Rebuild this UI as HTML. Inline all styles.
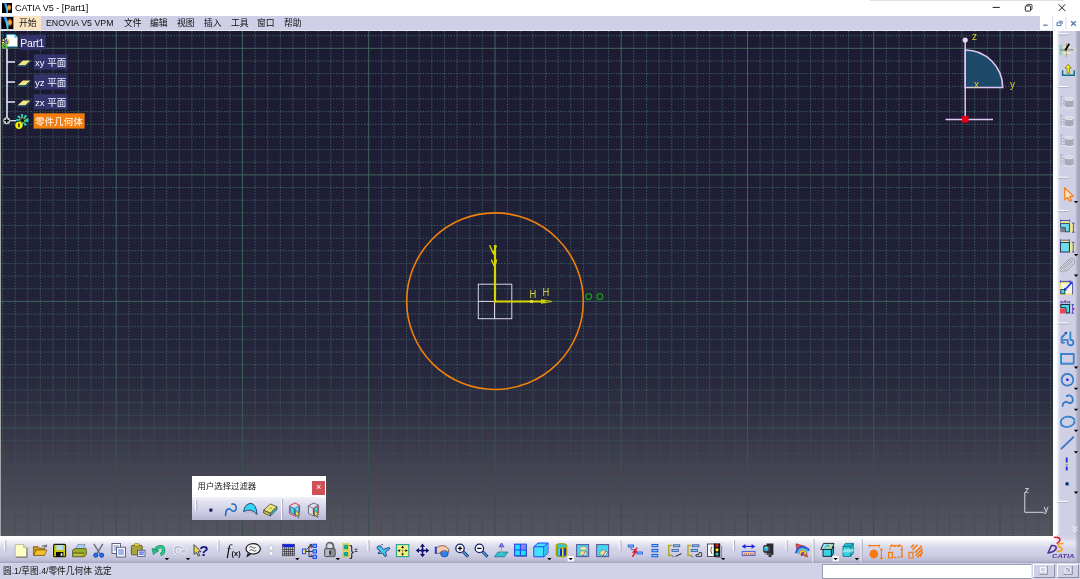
<!DOCTYPE html>
<html lang="zh">
<head>
<meta charset="utf-8">
<title>CATIA V5 - [Part1]</title>
<style>
*{box-sizing:border-box;margin:0;padding:0}
html,body{width:1080px;height:579px;overflow:hidden;background:#fff}
body{position:relative;font-family:"Liberation Sans","Noto Sans CJK SC",sans-serif;font-size:9px;color:#000}
.abs{position:absolute}
#title{left:0;top:0;width:1080px;height:16px;background:#fff}
#title .txt{left:15px;top:2px;font-size:9px;line-height:12px;white-space:nowrap;color:#000}
#menu{left:0;top:16px;width:1080px;height:14px;background:#cfcfe7}
#menu span{position:absolute;top:0;height:14px;line-height:14px;font-size:8.8px;white-space:nowrap;color:#111}
#menu .hl{background:#fbe4c3}
#view{left:1px;top:31px;width:1052px;height:505px;overflow:hidden;
 background:linear-gradient(to bottom,#1c1b33 0,#1c1b33 62px,#202038 224px,#24243c 312px,#28283f 351px,#333346 389px,#444352 441px,#52525e 491px,#575762 505px)}
#rtb{left:1053px;top:31px;width:27px;height:507px;background:linear-gradient(to right,#fff 0,#fff 3.4px,#e4e4f2 5.4px,#cfcfe6 7.6px,#cfcfe6 22px,#a8a7bc 24.8px,#a4a3b8 27px)}
#btb{left:0;top:535.5px;width:1080px;height:27.5px;background:linear-gradient(to bottom,#ffffff 0,#fbfbfd 12%,#e6e6f3 28%,#d6d6ea 45%,#cdcde4 70%,#bcbcd4 90%,#a4a4bc 100%)}
#status{left:0;top:563px;width:1080px;height:16px;background:#d1d1e7}
#status .txt{left:3px;top:2px;font-size:8.7px;line-height:12px;white-space:nowrap;color:#111}
#status .inp{left:821.5px;top:.5px;width:210px;height:15.5px;background:#fff;border:1px solid #9c9cb0;border-right-color:#e8e8f0}
.sbtn{position:absolute;top:.5px;height:14.5px;background:#cfcfe6;border:1px solid;border-color:#fff #8c8ca4 #8c8ca4 #fff}
.tl{position:absolute;white-space:nowrap;color:#f2f2ff;font-size:9.6px;line-height:17.6px;height:15.2px;padding:0 0 0 1.2px;overflow:hidden}
#dlg{left:192px;top:475.6px;width:134px;height:44.4px;background:#fff}
#dlg .dt{left:5.6px;top:4.5px;font-size:8.4px;line-height:12px;white-space:nowrap;color:#111}
#dlg .dx{left:120px;top:5px;width:13.4px;height:14.2px;background:#cf5057;color:#fff;font-size:9px;line-height:13.6px;text-align:center}
#dlg .db{left:0;top:21.4px;width:134px;height:23px;background:linear-gradient(to bottom,#f2f2f9 0,#e0e0f0 25%,#cfcfe6 60%,#b8b8d2 100%)}
#mctl{left:1040px;top:16px;width:40px;height:14px;background:#fff}
#page{position:absolute;left:0;top:0;width:1080px;height:579px;overflow:hidden;will-change:transform}
</style>
</head>
<body>
<div id="page">
<div id="title" class="abs">
  <svg class="abs" style="left:2px;top:3px" width="10" height="10" viewBox="0 0 12 12"><defs><radialGradient id="og" cx="50%" cy="50%" r="50%"><stop offset="0" stop-color="#ffd040"/><stop offset=".5" stop-color="#e87818"/><stop offset="1" stop-color="#000" stop-opacity="0"/></radialGradient><linearGradient id="bg1" x1="0" y1="0" x2="1" y2="0"><stop offset="0" stop-color="#1830a0"/><stop offset=".6" stop-color="#38b0f0"/><stop offset="1" stop-color="#70d0ff"/></linearGradient></defs><rect width="12" height="12" fill="#000"/><ellipse cx="8.6" cy="5.4" rx="3.4" ry="5" fill="url(#og)"/><path d="M1.6 0H5L7.4 6.6L7 12H5.4L4.6 7Z" fill="url(#bg1)"/></svg>
  <div class="abs txt">CATIA V5 - [Part1]</div>
</div>
<div id="menu" class="abs">
  <svg class="abs" style="left:1px;top:1px" width="12.6" height="12" viewBox="0 0 12 12"><rect width="12" height="12" fill="#000"/><ellipse cx="8.6" cy="5.4" rx="3.4" ry="5" fill="url(#og)"/><path d="M1.6 0H5L7.4 6.6L7 12H5.4L4.6 7Z" fill="url(#bg1)"/></svg>
  <span class="hl" style="left:14px;width:27px;padding-left:5px">开始</span>
  <span style="left:46px">ENOVIA V5 VPM</span>
  <span style="left:124px">文件</span>
  <span style="left:150px">编辑</span>
  <span style="left:177px">视图</span>
  <span style="left:204px">插入</span>
  <span style="left:231px">工具</span>
  <span style="left:257px">窗口</span>
  <span style="left:284px">帮助</span>
</div>
<div id="mctl" class="abs"></div>
<div class="abs" style="left:0;top:29.6px;width:1056px;height:2px;background:linear-gradient(to bottom,#f4f4f8 0,#e0e0e6 40%,#8c8c94 100%)"></div>
<div class="abs" style="left:0;top:31px;width:1.2px;height:505px;background:#a4a4aa"></div>
<div id="view" class="abs">
<svg class="abs" style="left:0;top:0" width="1052" height="505" viewBox="1 31 1052 505">
  <g id="grid">
<defs><linearGradient id="gg" gradientUnits="userSpaceOnUse" x1="0" y1="31" x2="0" y2="536"><stop offset="0" stop-color="#467866"/><stop offset=".66" stop-color="#427060"/><stop offset=".8" stop-color="#385c4e"/><stop offset="1" stop-color="#2e4a40"/></linearGradient></defs>
<path d="M2.5 31V538M15.2 31V538M27.8 31V538M40.4 31V538M53.1 31V538M65.7 31V538M78.3 31V538M90.9 31V538M103.6 31V538M128.8 31V538M141.4 31V538M154.1 31V538M166.7 31V538M179.3 31V538M191.9 31V538M204.6 31V538M217.2 31V538M229.8 31V538M255.1 31V538M267.7 31V538M280.3 31V538M292.9 31V538M305.6 31V538M318.2 31V538M330.8 31V538M343.4 31V538M356.1 31V538M381.3 31V538M394.0 31V538M406.6 31V538M419.2 31V538M431.8 31V538M444.5 31V538M457.1 31V538M469.7 31V538M482.3 31V538M507.6 31V538M520.2 31V538M532.8 31V538M545.5 31V538M558.1 31V538M570.7 31V538M583.3 31V538M596.0 31V538M608.6 31V538M633.8 31V538M646.5 31V538M659.1 31V538M671.7 31V538M684.3 31V538M697.0 31V538M709.6 31V538M722.2 31V538M734.9 31V538M760.1 31V538M772.7 31V538M785.4 31V538M798.0 31V538M810.6 31V538M823.2 31V538M835.9 31V538M848.5 31V538M861.1 31V538M886.4 31V538M899.0 31V538M911.6 31V538M924.2 31V538M936.9 31V538M949.5 31V538M962.1 31V538M974.7 31V538M987.4 31V538M1012.6 31V538M1025.3 31V538M1037.9 31V538M1050.5 31V538M0 35.7H1053M0 61.0H1053M0 73.6H1053M0 86.3H1053M0 99.0H1053M0 111.6H1053M0 124.3H1053M0 136.9H1053M0 149.6H1053M0 162.2H1053M0 187.5H1053M0 200.2H1053M0 212.8H1053M0 225.5H1053M0 238.1H1053M0 250.8H1053M0 263.4H1053M0 276.1H1053M0 288.7H1053M0 314.1H1053M0 326.7H1053M0 339.4H1053M0 352.0H1053M0 364.7H1053M0 377.3H1053M0 390.0H1053M0 402.6H1053M0 415.3H1053M0 440.6H1053M0 453.2H1053M0 465.9H1053M0 478.5H1053M0 491.2H1053M0 503.8H1053M0 516.5H1053M0 529.2H1053" stroke="url(#gg)" stroke-width="1" stroke-dasharray="1.3 1.5" fill="none" opacity=".78"/>
<path d="M116.2 31V538M242.4 31V538M0 48.3H1053M368.7 31V538M0 174.9H1053M495.0 31V538M0 301.4H1053M621.2 31V538M0 427.9H1053M747.5 31V538M873.7 31V538M1000.0 31V538" stroke="url(#gg)" stroke-width="1" fill="none" opacity=".8"/>
</g>
  <g id="sketch" fill="none">
    <circle cx="495" cy="301.2" r="88.3" stroke="#f0820c" stroke-width="1.6"/>
    <rect x="478.3" y="284.2" width="33.5" height="34.5" stroke="#d8d8ea" stroke-width="1"/>
    <path d="M478.3 301.4H495M494.5 301.4V318.7" stroke="#d8d8ea" stroke-width="1"/>
    <path d="M495 302.4V245" stroke="#d6d600" stroke-width="2.2"/>
    <path d="M494 301.5H545" stroke="#d6d600" stroke-width="2.1"/>
    <path d="M489.6 245.2L493.3 253.4L496.4 245.4M491.3 259.6L494.8 267L496.6 259.6" stroke="#d6d600" stroke-width="1.4"/>
    <path d="M541.6 299.9L551.8 301.5L541.6 303.1Z" stroke="#d6d600" stroke-width="1.2"/>
    <path d="M530 301.5h3" stroke="#e8e040" stroke-width="2.6"/>
    <circle cx="588.7" cy="296.6" r="2.9" stroke="#0f9d12" stroke-width="1.3"/>
    <circle cx="599.9" cy="296.6" r="2.9" stroke="#0f9d12" stroke-width="1.3"/>
  </g>
  <g font-family="'Liberation Sans',sans-serif" font-size="10" fill="#d8d040">
    <text x="529.4" y="297.8" textLength="6.8" lengthAdjust="spacingAndGlyphs">H</text>
    <text x="542.4" y="296.1" textLength="6.8" lengthAdjust="spacingAndGlyphs">H</text>
  </g>
  <g id="compass">
    <path d="M965.2 50A37.5 37.5 0 0 1 1002.7 87.5H965.2Z" fill="#1d4a68" stroke="#dcc6f2" stroke-width="1.6"/>
    <path d="M965.2 40V119.5M945.5 119.5H993" stroke="#dcc6f2" stroke-width="1.5" fill="none"/>
    <circle cx="965.2" cy="40" r="2.6" fill="#e6d6f8"/>
    <rect x="962" y="116" width="6.6" height="6.6" fill="#e2001a"/>
    <g font-family="'Liberation Sans',sans-serif" font-size="10" fill="#e2cc1c">
      <text x="972" y="40.2">z</text><text x="974" y="88">x</text><text x="1010" y="87.6">y</text>
    </g>
  </g>
  <g id="corner">
    <path d="M1024.8 492.4V512.3H1044.1" stroke="#d8d8e0" stroke-width="1" fill="none"/>
    <g font-family="'Liberation Sans',sans-serif" font-size="9.5" fill="#e4e4ea">
      <text x="1024.6" y="493.4">z</text><text x="1043.8" y="511.6">y</text>
    </g>
  </g>
  <g id="tree">
    <g id="lblbg" fill="#33326a">
      <rect x="19.8" y="34.7" width="25.9" height="15.1"/>
      <rect x="33.8" y="54.4" width="33.6" height="15.2"/>
      <rect x="33.8" y="74.3" width="33.6" height="15.2"/>
      <rect x="33.8" y="94.2" width="33.6" height="15.2"/>
      <rect x="33.6" y="113.3" width="51" height="15.3" fill="#f57d0c"/>
    </g>
    <g id="part1icon">
      <path d="M6.6 34.4H14.6L17.6 37.4V46.8H6.6Z" fill="#fff" stroke="#28b8d8" stroke-width=".8"/>
      <path d="M14.6 34.4V37.4H17.6" fill="#9adcf0" stroke="#28b8d8" stroke-width=".6"/>
      <circle cx="5.8" cy="42" r="2.9" fill="#3a3a58" stroke="#f0e060" stroke-width="2.2" stroke-dasharray="1.5 1"/>
      <circle cx="6.2" cy="42" r="1.2" fill="#8a8ab0"/>
      <circle cx="4.6" cy="46" r="2.2" fill="#28284a" stroke="#62d040" stroke-width="1.3"/>
      <path d="M3.6 46.6Q4.6 44.6 5.8 46" stroke="#f0e820" stroke-width="1" fill="none"/>
    </g>
    <g id="bodyicon">
      <circle cx="6.7" cy="120.7" r="3.5" fill="#c8c8cc"/>
      <path d="M4.4 120.7H9M6.7 118.4V123" stroke="#000" stroke-width="1.3"/>
      <path d="M10.2 120.7H16" stroke="#e6e6f6" stroke-width="1.3"/>
      <circle cx="22.6" cy="120.2" r="6.6" fill="#10182c"/>
      <circle cx="22.4" cy="120.2" r="4.6" fill="none" stroke="#2cc4c0" stroke-width="3.4" stroke-dasharray="2 1.3"/>
      <circle cx="22.4" cy="120.2" r="2.6" fill="none" stroke="#9ad030" stroke-width="1.6" stroke-dasharray="1.6 1"/>
      <circle cx="18.9" cy="125.3" r="3.6" fill="#f6f000"/>
      <rect x="18.2" y="123.4" width="1.5" height="3.8" fill="#302800"/>
    </g>
    <path d="M7 48.5V118" stroke="#e6e6f6" stroke-width="1.6"/>
    <path d="M7 62H15M7 82H15M7 102H15" stroke="#e6e6f6" stroke-width="1.3"/>
    <g id="pl1"><path d="M22.9 60.6H30.4L25.2 65.3H17.7Z" fill="#f6e384"/><path d="M17.2 66H25.4L30.6 61.2" stroke="#1f6f92" stroke-width="1" fill="none"/></g>
    <g transform="translate(0 20)"><path d="M22.9 60.6H30.4L25.2 65.3H17.7Z" fill="#f6e384"/><path d="M17.2 66H25.4L30.6 61.2" stroke="#1f6f92" stroke-width="1" fill="none"/></g>
    <g transform="translate(0 40)"><path d="M22.9 60.6H30.4L25.2 65.3H17.7Z" fill="#f6e384"/><path d="M17.2 66H25.4L30.6 61.2" stroke="#1f6f92" stroke-width="1" fill="none"/></g>
  </g>
</svg>
</div>
<div class="tl" style="left:19.5px;top:34.7px;width:26.3px;font-size:10.5px;letter-spacing:-0.25px;padding-left:.8px;line-height:16.2px">Part1</div>
<div class="tl" style="left:33.7px;top:54.4px;width:33.7px">xy 平面</div>
<div class="tl" style="left:33.7px;top:74.3px;width:33.7px">yz 平面</div>
<div class="tl" style="left:33.7px;top:94.2px;width:33.7px">zx 平面</div>
<div class="tl" style="left:33.7px;top:113.3px;width:51px;color:#fff">零件几何体</div>
<div id="rtb" class="abs"></div>
<div id="btb" class="abs"></div>
<div class="abs" style="left:1057px;top:535px;width:23px;height:9px;background:linear-gradient(to bottom,rgba(210,210,232,1) 0,rgba(210,210,232,1) 35%,rgba(210,210,232,0) 100%)"></div>
<div class="abs" style="left:1075px;top:535px;width:5px;height:28px;background:linear-gradient(to right,rgba(164,163,184,0),rgba(164,163,184,.9) 60%,rgba(164,163,184,.9))"></div>
<div id="status" class="abs"><div class="abs txt">圆.1/草图.4/零件几何体 选定</div><div class="abs inp"></div><div class="sbtn" style="left:1032.5px;width:22.5px"></div><div class="sbtn" style="left:1056.5px;width:22.5px"></div></div>
<div id="dlg" class="abs"><div class="abs dt">用户选择过滤器</div><div class="abs dx">×</div><div class="abs db"></div></div>
<svg id="ov" class="abs" style="left:0;top:0" width="1080" height="579" viewBox="0 0 1080 579">
<defs>
  <path id="dd" d="M-2.2 0H2.2L0 2.3Z" fill="#000"/>
  <g id="hh"><path d="M0 0H11" stroke="#fff" stroke-width="1.2"/><path d="M.6 1H11.6" stroke="#a6a6bc" stroke-width=".8"/></g>
  <g id="vh"><path d="M0 0V11" stroke="#fff" stroke-width="1.3"/><path d="M1 .5V11.5" stroke="#a0a0b6" stroke-width=".8"/></g>
  <g id="gic">
    <path d="M5 3.4C5 1.8 13.6 1.8 13.6 3.4V10.6C13.6 12.4 5 12.4 5 10.6Z" fill="#a9a9ba"/>
    <ellipse cx="9.3" cy="3.5" rx="4.3" ry="1.5" fill="#d4d4e0" stroke="#f6f6fb" stroke-width=".7"/>
    <path d="M5.2 11.3C6.5 12.9 12.6 12.9 14 11.2" stroke="#f4f4fa" stroke-width=".8" fill="none"/>
    <path d="M1.5 1V10.5H5M1.5 4.5H4.5M1.5 7.5H4.5" stroke="#9c9cae" stroke-width="1" fill="none"/>
    <path d="M2.3 1.6V11.2H5.6" stroke="#f4f4fa" stroke-width=".7" fill="none"/>
    <circle cx="1.8" cy="1.3" r="1.2" fill="#b4b4c4"/>
  </g>
</defs>
<!-- title bar controls -->
<path d="M870 0H1064V.9H870Z" fill="#d8d8d8" opacity=".8"/>
<path d="M992.6 7.4H999.8" stroke="#222" stroke-width="1"/>
<path d="M1026.6 5.9V5.2Q1026.6 4.4 1027.6 4.4H1031Q1032 4.4 1032 5.4V8.8Q1032 9.6 1031 9.6H1030.6" stroke="#333" stroke-width=".9" fill="none"/>
<rect x="1025.3" y="5.9" width="5.3" height="5.2" rx=".9" stroke="#222" stroke-width="1" fill="none"/>
<path d="M1058.6 4.3L1065.3 11.1M1065.3 4.3L1058.6 11.1" stroke="#222" stroke-width="1"/>
<!-- mdi controls -->
<path d="M1052.6 16.5V29.5M1066 16.5V29.5" stroke="#e2e2f0" stroke-width="1.2"/>
<path d="M1043.2 25.2H1047.6" stroke="#5a7ca4" stroke-width="1.3"/>
<path d="M1058.6 21.2H1062.2V24" stroke="#5a7ca4" stroke-width="1" fill="none"/><rect x="1057" y="22.8" width="3.8" height="2.8" stroke="#5a7ca4" stroke-width="1" fill="#fff"/>
<path d="M1071.2 21.2L1075.8 25.8M1075.8 21.2L1071.2 25.8" stroke="#5a7ca4" stroke-width="1.4"/>
<!-- right toolbar -->
<use href="#hh" x="1057" y="33.9"/><use href="#hh" x="1057" y="86.6"/><use href="#hh" x="1057" y="177.3"/><use href="#hh" x="1057" y="210.5"/><use href="#hh" x="1057" y="323"/><use href="#hh" x="1057" y="501.4"/>
<g id="r1">
  <defs><linearGradient id="r1g" x1="0" y1="0" x2="1" y2="0"><stop offset="0" stop-color="#86d2b8"/><stop offset=".55" stop-color="#b4e2d0"/><stop offset="1" stop-color="#f2f0d0"/></linearGradient></defs>
  <path d="M1059.4 44.2L1076.4 49.9L1059.4 55.8Z" fill="url(#r1g)"/>
  <rect x="1062.6" y="45.8" width="8.4" height="8.4" fill="#f2f2f0" stroke="#c4c4c0" stroke-width=".6"/>
  <path d="M1062.6 48.6H1071M1062.6 51.4H1071M1069 45.8V54.2M1064 45.8V54.2" stroke="#b8b8b4" stroke-width=".6"/>
  <path d="M1066.4 43V57" stroke="#b49868" stroke-width=".9"/>
  <path d="M1060 49.9H1074" stroke="#74746c" stroke-width=".9"/>
  <path d="M1069.2 43.8L1065.2 50.6" stroke="#0c0c0c" stroke-width="1.9"/>
</g>
<g id="r2">
  <path d="M1062.6 70.2V75.2H1074.2V70.2" stroke="#0d7384" stroke-width="1.5" fill="none"/>
  <path d="M1068.2 64.3L1071.4 68.2H1069.4V73.4H1067V68.2H1065Z" fill="#f4ec10" stroke="#404000" stroke-width=".5"/>
</g>
<use href="#gic" x="1059.8" y="95.6"/><use href="#gic" x="1059.8" y="114.6"/><use href="#gic" x="1059.8" y="134.2"/><use href="#gic" x="1059.8" y="153.8"/>
<g id="r3"><path d="M1064.6 187.6L1073.4 196.2L1069.6 196.6L1071.6 200.6L1069.6 201.2L1067.8 197.4L1064.8 199.8Z" fill="#fbe0c0" stroke="#f2801c" stroke-width="1.2" stroke-linejoin="round"/><use href="#dd" x="1076" y="201"/></g>
<g id="r4">
  <path d="M1060.6 223.4H1069.4V231.8H1065.4V227.4H1060.6Z" fill="#6fdcea" stroke="#14204c" stroke-width=".8"/>
  <path d="M1060.2 227.6H1065.2V232.2H1060.2Z" fill="#7c7c86"/>
  <path d="M1060.6 220.6H1069.6M1060.6 219.6V222.6M1069.6 219.6V222.6" stroke="#2a2a9a" stroke-width=".8"/>
  <rect x="1070.2" y="223.2" width="2.6" height="8.8" fill="#f2ec7c"/>
  <path d="M1073.4 223.2V232.2M1072 223.2H1074.6M1072 232.2H1074.6" stroke="#2a2a9a" stroke-width=".7"/>
  <rect x="1060.6" y="221.2" width="9" height="1.8" fill="#f2ec7c" opacity=".8"/>
</g>
<g id="r5">
  <rect x="1060.4" y="242.4" width="9" height="9.6" fill="#6fdcea" stroke="#14204c" stroke-width=".9"/>
  <rect x="1060.4" y="239.8" width="9" height="2" fill="#f2ec7c"/>
  <path d="M1060.4 239.2V242M1069.4 239.2V242M1060.4 240.2H1069.4" stroke="#2a2a9a" stroke-width=".7"/>
  <rect x="1070.2" y="242.4" width="2.8" height="9.6" fill="#f2ec7c"/>
  <path d="M1073.2 242.4V252M1071.8 242.4H1074.4M1071.8 252H1074.4" stroke="#2a2a9a" stroke-width=".7"/>
  <use href="#dd" x="1076" y="254"/>
</g>
<g id="r6">
  <path d="M1072.6 262.2L1064.2 270.2Q1062.4 272 1061.2 270.6Q1060.2 269.2 1062 267.4L1069.6 260.4Q1071.8 258.6 1073.4 260.2Q1074.8 262 1072.8 263.8L1065.6 270.6" stroke="#8c8c98" stroke-width="2.2" fill="none"/>
  <path d="M1072.6 262.2L1064.2 270.2Q1062.4 272 1061.2 270.6Q1060.2 269.2 1062 267.4L1069.6 260.4Q1071.8 258.6 1073.4 260.2Q1074.8 262 1072.8 263.8L1065.6 270.6" stroke="#fcfcff" stroke-width="1" fill="none"/>
  <use href="#dd" x="1076" y="274.6"/>
</g>
<g id="r7">
  <rect x="1060.6" y="282.6" width="12.6" height="11.6" fill="#f6f6e2" stroke="#e6e070" stroke-width="1.4"/>
  <path d="M1060.4 281.4H1070M1060.4 280.4V282.6M1070 280.4V282.6" stroke="#2a2a9a" stroke-width=".8"/>
  <path d="M1072.6 283.6V294.4" stroke="#2a2a9a" stroke-width=".8"/>
  <path d="M1064.8 290L1072 282.2" stroke="#1a38f0" stroke-width="1.7"/>
  <path d="M1072.6 281.4V285L1069.4 281.8Z M1064 290.8V287.4L1067 290.4Z" fill="#1a38f0"/>
  <rect x="1060.8" y="289.6" width="4" height="4.2" fill="#46d6e6" stroke="#14204c" stroke-width=".8"/>
</g>
<g id="r8">
  <path d="M1060.8 304.4H1069.6V313H1066V307.8H1060.8Z" fill="#4fd6e4" stroke="#10182c" stroke-width="1"/>
  <rect x="1060" y="308.8" width="5.6" height="4.6" fill="#ec4452"/>
  <path d="M1061 302H1069.6M1061 301V303.4M1069.6 301V303.4M1072.6 304.6V313.2M1071.4 304.6H1074M1071.4 313.2H1074" stroke="#2a34c0" stroke-width=".8"/>
  <circle cx="1065.2" cy="301.2" r="1" fill="#e81828"/><circle cx="1073.6" cy="309" r="1" fill="#e81828"/>
</g>
<defs><g id="skp">
  <path d="M1064 342.6H1061.6V337.6L1066.2 332.8M1061.8 339.7H1067.6V342.4A2.9 2.9 0 1 0 1070.4 339.6V332.4"/>
  
  <rect x="1060.9" y="353.8" width="12.8" height="9.8"/>
  <circle cx="1067.4" cy="379.8" r="5.9"/>
  <path d="M1062.6 406C1062.8 401.6 1066 401.4 1068.2 402.6C1071.4 404.2 1073.6 401.4 1072.6 398.2C1071.8 395.6 1069 394.6 1066.8 396"/>
  <ellipse cx="1067.6" cy="421.8" rx="7" ry="5.1" transform="rotate(-12 1067.6 421.8)"/>
  <path d="M1061.4 448.6L1073.4 437.2"/>
</g></defs>
<use href="#skp" fill="none" stroke="#2650b0" stroke-width="1.65" stroke-linecap="round" stroke-linejoin="round"/>
<use href="#skp" fill="none" stroke="#3cb8f0" stroke-width=".75" stroke-linecap="round" stroke-linejoin="round"/>
<path d="M1066.8 332L1066.6 334.6L1064.4 332.6Z" fill="#1a2a8c" stroke="none"/>
<circle cx="1067.4" cy="379.8" r="1.3" fill="#1414e8"/>
<path d="M1066.7 457.6V470.4" stroke="#1c2cd4" stroke-width="1.8" stroke-dasharray="5 1.2 1.4 1.2"/>
<path d="M1066.7 462.8V464.8" stroke="#e8e070" stroke-width="1.2"/>
<rect x="1065.6" y="482.4" width="3" height="3" fill="#101058"/><path d="M1068.8 482.4V485.6H1065.8" stroke="#38b8e8" stroke-width=".7" fill="none"/>
<use href="#dd" x="1076" y="366.6"/><use href="#dd" x="1076" y="387.8"/><use href="#dd" x="1076" y="408.8"/><use href="#dd" x="1076" y="429.8"/><use href="#dd" x="1076" y="451.2"/><use href="#dd" x="1076" y="491.6"/>
<path d="M1072.8 526.6L1075 528.8L1077.2 526.6M1072.8 529.6L1075 531.8L1077.2 529.6" stroke="#fff" stroke-width="1" fill="none"/>
<!-- bottom toolbar -->
<use href="#vh" x="4.8" y="539.6"/><use href="#vh" x="218" y="539.6"/><use href="#vh" x="368" y="539.6"/><use href="#vh" x="620" y="539.6"/><use href="#vh" x="733.6" y="539.6"/><use href="#vh" x="786.2" y="539.6"/>
<path d="M813 539V562.4M861.2 539V562.4" stroke="#fff" stroke-width="1"/><path d="M814 539V562.4M862.2 539V562.4" stroke="#9c9cb2" stroke-width=".8"/>
<g id="b-new"><path d="M16 545.4H24.4L27.4 548.4V557.6H16Z" fill="#50505a"/><path d="M15.2 544.6H23.6L26.6 547.6V556.8H15.2Z" fill="#ffffc6" stroke="#8a8a70" stroke-width=".5"/><path d="M23.6 544.6V547.6H26.6" fill="#e6e6a0" stroke="#8a8a70" stroke-width=".5"/></g>
<g id="b-open"><path d="M33.4 546.6H38L39.4 548.2H44.6V555.4H33.4Z" fill="#c89414" stroke="#5c4408" stroke-width=".6"/><path d="M33.6 555.4L36.4 550H47L44.4 555.4Z" fill="#f2c02c" stroke="#5c4408" stroke-width=".6"/><path d="M42 546.4Q44.4 544.4 46 546.4M46.4 544.6V546.8H44.2" stroke="#333" stroke-width=".8" fill="none"/></g>
<g id="b-save"><rect x="53.6" y="544.4" width="12" height="12.4" rx="1" fill="#caca08" stroke="#18180c" stroke-width="1.1"/><rect x="56.4" y="545" width="6.6" height="5" fill="#b6dcf4"/><rect x="56" y="552" width="7.4" height="4.8" fill="#0c0c0c"/><rect x="60.6" y="553.2" width="1.8" height="2.6" fill="#f6f6f6"/></g>
<g id="b-print"><path d="M75.6 549.4L78 544.4H85L83.4 549.4Z" fill="#a8d0f4" stroke="#55708c" stroke-width=".6"/><path d="M72.6 550.2L75 548.6H86L86.4 550.4V554.6L84 556.8H72.6Z" fill="#a4aa2c" stroke="#3c4010" stroke-width=".7"/><path d="M72.6 553H84.4" stroke="#5a6014" stroke-width="1"/><path d="M74 554.8H82" stroke="#d6e080" stroke-width=".8"/><circle cx="82.6" cy="551.6" r=".7" fill="#30e030"/></g>
<g id="b-cut"><path d="M93.8 543.8L99.6 553.4M102.8 543.8L97.2 553.4" stroke="#70707c" stroke-width="1.5"/><circle cx="95.8" cy="555.2" r="2.1" fill="#2a74ee" stroke="#0c3cb0" stroke-width=".9"/><circle cx="101.6" cy="555.2" r="2.1" fill="#2a74ee" stroke="#0c3cb0" stroke-width=".9"/></g>
<g id="b-copy"><rect x="112" y="543.6" width="8.4" height="9.8" fill="#fafafa" stroke="#3c4460" stroke-width=".8"/><path d="M113.6 546H118.8M113.6 548H118.8M113.6 550H118.8" stroke="#5676d8" stroke-width=".8"/><rect x="116.6" y="547.2" width="8.8" height="9.8" fill="#fafafa" stroke="#3c4460" stroke-width=".8"/><path d="M118.2 550H123.8M118.2 552H123.8M118.2 554H123.8" stroke="#4a64e0" stroke-width="1.1"/></g>
<g id="b-paste"><rect x="131.4" y="545.4" width="10.8" height="9.4" rx="1" fill="#a6a63c" stroke="#4a4a14" stroke-width=".8"/><rect x="134.4" y="543.6" width="4.8" height="2.6" rx=".8" fill="#f0d048" stroke="#6a5a10" stroke-width=".5"/><rect x="137.6" y="550.2" width="7.4" height="6.4" fill="#f4f4fc" stroke="#30386c" stroke-width=".7"/><path d="M138.8 552.2H143.8M138.8 554.2H143.8" stroke="#4058e8" stroke-width="1.2"/></g>
<g id="b-undo"><path d="M155 551.4C156 546.4 162.6 545 163.6 549.4C164.2 552 162.6 553.6 160.6 554.8" stroke="#158c5c" stroke-width="3.2" fill="none"/><path d="M155 551.4C156 546.4 162.6 545 163.6 549.4C164.2 552 162.6 553.6 160.6 554.8" stroke="#2cd08c" stroke-width="1.8" fill="none"/><path d="M152 548.6L158.8 550.6L153.4 554.6Z" fill="#24c484" stroke="#0f7048" stroke-width=".6"/><use href="#dd" x="166.9" y="558"/></g>
<g id="b-redo"><path d="M183.4 551.4C182.4 546.4 175.8 545 174.8 549.4C174.2 552 175.8 553.6 177.8 554.8" stroke="#f6f6fb" stroke-width="3" fill="none"/><path d="M183.4 551.4C182.4 546.4 175.8 545 174.8 549.4C174.2 552 175.8 553.6 177.8 554.8" stroke="#b4b4c6" stroke-width="1.4" fill="none"/><path d="M186.4 548.6L179.6 550.6L185 554.6Z" fill="#c2c2d2" stroke="#f6f6fb" stroke-width=".6"/><use href="#dd" x="188" y="558"/></g>
<g id="b-help"><path d="M194 544.6L194 554.4L196.4 552.4L198.2 556.2L199.8 555.4L198 551.8L201 551.6Z" fill="#ecdc34" stroke="#20207c" stroke-width=".8" stroke-linejoin="round"/><text x="199.2" y="556" font-family="'Liberation Sans',sans-serif" font-weight="bold" font-size="15.4" fill="#14147c">?</text></g>
<g id="b-fx" font-family="'Liberation Serif',serif" fill="#0c0c0c"><text x="226.4" y="555.4" font-size="15" font-style="italic">f</text><text x="231.6" y="556" font-size="7.4" font-family="'Liberation Sans',sans-serif" font-weight="bold">(x)</text></g>
<g id="b-bubble"><path d="M247.4 553.4L246.4 557.6L251 554.6" fill="#181818"/><ellipse cx="253.2" cy="548.8" rx="7.2" ry="5.2" fill="#f8f8f8" stroke="#181818" stroke-width="1.2"/><path d="M249.4 547.4Q251 545.6 252.6 547.4T255.8 547.4M249.8 550.4Q251.4 548.8 253 550.4T256.4 550.4" stroke="#44444c" stroke-width=".9" fill="none"/></g>
<g id="b-grey"><rect x="268.8" y="545.6" width="4.2" height="4.6" rx="1.6" fill="#fafaff" stroke="#b6b6c8" stroke-width=".8"/><path d="M271 551L273.4 553.4L271 555.8L268.6 553.4Z" fill="#fafaff" stroke="#b6b6c8" stroke-width=".7"/></g>
<g id="b-table"><rect x="282.6" y="544.2" width="11.8" height="11.6" fill="#d6d6de" stroke="#282830" stroke-width=".6"/><rect x="282.6" y="544.2" width="11.8" height="3" fill="#1222e4"/><path d="M284.6 547.2V555.8M286.6 547.2V555.8M288.6 547.2V555.8M290.6 547.2V555.8M292.6 547.2V555.8M282.6 549.4H294.4M282.6 551.6H294.4M282.6 553.8H294.4" stroke="#34343c" stroke-width=".8"/><use href="#dd" x="297.3" y="558"/></g>
<g id="b-tree"><path d="M305.6 551.4H313M309 551.4V546H313M309 551.4V556.6H313" stroke="#1c1c24" stroke-width=".9" fill="none"/><path d="M306.4 549.6L311.6 544.6M311.8 546.6V544.4H309.6" stroke="#1c1c24" stroke-width=".8" fill="none"/><rect x="302.4" y="549" width="3.2" height="4.8" fill="#f4e064" stroke="#1c40e4" stroke-width=".9"/><rect x="313" y="544.2" width="3.4" height="3.2" fill="#58c8ff" stroke="#1c30f0" stroke-width=".9"/><rect x="313" y="549.8" width="3.4" height="3.2" fill="#58c8ff" stroke="#1c30f0" stroke-width=".9"/><rect x="313" y="555.2" width="3.4" height="3.2" fill="#58c8ff" stroke="#1c30f0" stroke-width=".9"/><rect x="310.6" y="546.8" width="1.4" height="1.4" fill="#e02030"/><rect x="310.6" y="554.4" width="1.4" height="1.4" fill="#e02030"/></g>
<g id="b-lock"><path d="M326.6 549.4V546.6Q326.6 542.8 330 542.8T333.4 546.6V549.4" stroke="#6a6a72" stroke-width="2" fill="none"/><path d="M327.2 549.4V546.6Q327.2 543.6 330 543.6" stroke="#d0d0d8" stroke-width=".8" fill="none"/><rect x="324.6" y="548.6" width="10.6" height="8" rx="1.2" fill="#8e8e96" stroke="#3c3c44" stroke-width=".8"/><rect x="325.4" y="549.4" width="3.6" height="6.4" fill="#b8b8c0"/><rect x="329.4" y="551" width="1.6" height="3.4" fill="#2a2a30"/><use href="#dd" x="337.8" y="558"/></g>
<g id="b-eq"><rect x="343.2" y="543.8" width="5.4" height="5.8" fill="#18a49c" stroke="#d8cc20" stroke-width="1.1"/><rect x="343.2" y="551" width="5.4" height="5.8" fill="#18a49c" stroke="#d8cc20" stroke-width="1.1"/><path d="M343.6 544.2H348.2M343.6 551.4H348.2" stroke="#f4f080" stroke-width=".8"/><text x="349.6" y="555.8" font-family="'Liberation Sans',sans-serif" font-size="14.6" fill="#1a1a1a" textLength="4.4" lengthAdjust="spacingAndGlyphs">}</text><path d="M354.6 549.2H357.4M354.6 551.4H357.4" stroke="#1a1a1a" stroke-width=".9"/></g>
<g id="b-fly"><path d="M377.6 546.4L380.4 545.8L383.6 549.4L388.2 547.6Q390.4 547.4 389.6 549L385.6 551.8L386.4 556L384.8 556.4L382.4 553L378.6 553.8L378 552.8L380.4 551.2L377 548.4Z" fill="#44c8ea" stroke="#14246c" stroke-width=".8" stroke-linejoin="round"/><path d="M380.8 545.4Q381.6 543.8 383 544.8" stroke="#14246c" stroke-width=".7" fill="none"/></g>
<g id="b-fit"><rect x="396.4" y="544.6" width="12.4" height="12" fill="#f2f27e" stroke="#22a09c" stroke-width="1.1"/><path d="M402.6 546V555.4M397.8 550.6H407.4" stroke="#8c8c50" stroke-width=".6"/><path d="M402.6 545.6L404 548H401.2ZM402.6 555.8L404 553.4H401.2ZM397.4 550.6L399.8 549.2V552ZM407.8 550.6L405.4 549.2V552Z" fill="#0c0c0c"/></g>
<g id="b-pan" fill="#12126c"><path d="M422.5 545.6V555.2M417.6 550.4H427.4" stroke="#12126c" stroke-width="1.5"/><path d="M422.5 543.6L425 546.8H420ZM422.5 557.2L425 554H420ZM415.8 550.4L419 547.9V552.9ZM429.2 550.4L426 547.9V552.9Z"/><circle cx="422.5" cy="550.4" r="1.5"/></g>
<g id="b-rot"><circle cx="444.4" cy="553" r="3.9" fill="#2c84ea" stroke="#103c9c" stroke-width=".7"/><path d="M442.6 551.6Q443.6 550.6 445 551" stroke="#b8dcff" stroke-width=".9" fill="none"/><path d="M435.6 547.2V553.4H437.6Q440 553.8 441 551.6L444 550.6Q446.4 550.8 448 552.2Q449.6 551.4 448.6 549.2Q446.6 545.6 442.4 545.6Q439.6 545.8 437.6 547.2Z" fill="#f6c8ac" stroke="#6c3424" stroke-width=".7" stroke-linejoin="round"/><rect x="434.8" y="546.8" width="2" height="7" fill="#2244c0"/></g>
<g id="b-zin"><path d="M463.2 551.8L468.2 556.8" stroke="#14246c" stroke-width="2.8"/><path d="M463.4 552L468 556.6" stroke="#48c0e8" stroke-width="1.1"/><circle cx="460" cy="548.4" r="4.2" fill="#fafaff" stroke="#14246c" stroke-width="1.3"/><path d="M457.8 548.4H462.2M460 546.2V550.6" stroke="#0a0a0a" stroke-width="1.3"/></g>
<g id="b-zout"><path d="M482.6 551.8L487.6 556.8" stroke="#14246c" stroke-width="2.8"/><path d="M482.8 552L487.4 556.6" stroke="#48c0e8" stroke-width="1.1"/><circle cx="479.4" cy="548.4" r="4.2" fill="#fafaff" stroke="#14246c" stroke-width="1.3"/><path d="M477.2 548.4H481.6" stroke="#0a0a0a" stroke-width="1.3"/></g>
<g id="b-norm"><path d="M498 552H508L504.4 556.8H494.4Z" fill="#34c2d0" stroke="#146c84" stroke-width=".7"/><path d="M501.5 546.6V553.4" stroke="#f09c38" stroke-width="1.2"/><path d="M501.5 543L504 546.8H499Z" fill="#8888f4" stroke="#2424c4" stroke-width=".6"/></g>
<g id="b-multi"><rect x="515.4" y="545" width="11.6" height="11.6" fill="#5a5a78"/><rect x="514.6" y="544.2" width="11.6" height="11.6" fill="#22e2ff" stroke="#2244e4" stroke-width="1.1"/><rect x="520.6" y="544.6" width="5.2" height="5.2" fill="#8484f2"/><path d="M520.4 544.2V555.8M514.6 550H526.2" stroke="#2244e4" stroke-width="1.1"/></g>
<g id="b-cube"><path d="M533.8 546.8L538 543H548V552.8L543.8 556.8H533.8Z" fill="#42e2ff" stroke="#2244ff" stroke-width="1" stroke-linejoin="round"/><path d="M533.8 546.8H543.8V556.8M543.8 546.8L548 543" stroke="#2244ff" stroke-width="1" fill="none"/><path d="M544.4 547.2L547.6 544.2V552.6L544.4 555.8Z" fill="#2cc4ea"/><use href="#dd" x="549.4" y="558"/></g>
<g id="b-cyl"><rect x="567.6" y="556" width="6.4" height="5.4" fill="#fafafc"/><path d="M556.4 546V554.4C556.4 557.4 566.6 557.4 566.6 554.4V546Z" fill="#1232c4" stroke="#a4a408" stroke-width="1.3"/><rect x="557.4" y="547" width="2.6" height="8.6" fill="#3cd4f4"/><rect x="562" y="547.4" width="1.6" height="8.6" fill="#e6e24c"/><ellipse cx="561.5" cy="545.8" rx="5.1" ry="2.2" fill="#30c6f0" stroke="#a4a408" stroke-width="1.3"/><use href="#dd" x="570.7" y="558"/></g>
<g id="b-hide"><rect x="576.6" y="544.6" width="12" height="12" fill="#42d8f2" stroke="#5c5c9c" stroke-width="1.1"/><ellipse cx="583.4" cy="548.4" rx="3.6" ry="2" fill="#e6e6c0" stroke="#8a8a6a" stroke-width=".6"/><path d="M578.8 554.2L581.6 550.4L585.8 551.6L583 555.6Z" fill="#f4e68a" stroke="#6c6c3c" stroke-width=".5"/><path d="M583 555.6L585.8 551.6L587.6 552.6L584.8 556Z" fill="#fafafa" stroke="#30306c" stroke-width=".5"/></g>
<g id="b-swap"><rect x="596.6" y="544.6" width="12" height="12" fill="#42d8f2" stroke="#5c5c9c" stroke-width="1.1"/><path d="M599 554L601.8 550.2L606 551.4L603.2 555.4Z" fill="#f4e68a" stroke="#6c6c3c" stroke-width=".5"/><path d="M603.2 555.4L606 551.4L607.6 552.4L605 556Z" fill="#fafafa" stroke="#30306c" stroke-width=".5"/><path d="M601.8 550.2Q604 548.6 606 551.4" fill="#fff" stroke="#30306c" stroke-width=".5"/></g>
<g id="b-a"><path d="M631 546.8V549.6H635.6M640 553H636.4" stroke="#6c50b0" stroke-width=".9" fill="none"/><rect x="628.2" y="545" width="5.4" height="2" fill="#6ee0f4" stroke="#2244e4" stroke-width=".8"/><rect x="637" y="552" width="5.6" height="2" fill="#6ee0f4" stroke="#2244e4" stroke-width=".8"/><path d="M637.2 547.6L633.6 552L636 551.6L632.4 556.8" stroke="#e0142c" stroke-width="1.5" fill="none"/></g>
<g id="b-b" fill="#6ee0f4" stroke="#2244e4" stroke-width=".9"><rect x="652" y="544.4" width="5.8" height="2.4"/><rect x="652" y="549.4" width="5.8" height="2.4"/><rect x="652" y="554.4" width="5.8" height="2.4"/></g>
<g id="b-c"><path d="M672.4 545.4H668.8V555.4H672.4" stroke="#b4aa20" stroke-width="1.5" fill="none"/><path d="M671.6 555.4L674 557.2" stroke="#4a4a9c" stroke-width=".8"/><rect x="673.4" y="544.8" width="6.4" height="2" fill="#6ee0f4" stroke="#4a4a9c" stroke-width=".8"/><rect x="672" y="549.6" width="6.4" height="2" fill="#6ee0f4" stroke="#4a4a9c" stroke-width=".8"/><path d="M675.4 556.4L681.4 553.6" stroke="#3c3c44" stroke-width="1.1"/></g>
<g id="b-d"><path d="M691.6 545.4H688V555.4H691.6" stroke="#b4aa20" stroke-width="1.5" fill="none"/><path d="M690.8 555.4L693.2 557.2" stroke="#4a4a9c" stroke-width=".8"/><rect x="692.6" y="544.8" width="6.4" height="2" fill="#6ee0f4" stroke="#4a4a9c" stroke-width=".8"/><rect x="691.2" y="549.6" width="6.4" height="2" fill="#6ee0f4" stroke="#4a4a9c" stroke-width=".8"/><path d="M696 556.4V554.6H699V552.6H701.6V556.4Z" fill="#dcdce8" stroke="#2c2c34" stroke-width=".9"/></g>
<g id="b-e"><rect x="707.6" y="544" width="7" height="12.4" fill="#fafafa" stroke="#2c2c34" stroke-width=".8"/><path d="M712 546.4Q709.4 550.2 712 554" stroke="#44444c" stroke-width=".8" fill="none"/><rect x="713.8" y="543.4" width="6.4" height="13.4" fill="#141414"/><path d="M720.2 545L721.6 546.4V557.4H715.4" stroke="#74747c" stroke-width=".8" fill="none"/><circle cx="717" cy="545.6" r="1.6" fill="#e01c1c"/><circle cx="717" cy="549.8" r="1.6" fill="#f4ec1c"/><circle cx="717" cy="554" r="1.6" fill="#1cc4cc"/><use href="#dd" x="723.2" y="558"/></g>
<g id="b-meas"><path d="M743.6 546.4H753.4" stroke="#2222e0" stroke-width="1.2"/><path d="M741.8 546.4L745.4 544V548.8ZM755.2 546.4L751.6 544V548.8Z" fill="#2222e0"/><rect x="742.2" y="551.4" width="12.8" height="4.2" fill="#f6c4a4" stroke="#3858e0" stroke-width=".9"/><path d="M744.4 553V555.4M746.6 553V555.4M748.8 553V555.4M751 553V555.4M753 553V555.4" stroke="#a45c3c" stroke-width=".7"/></g>
<g id="b-mon"><path d="M766.6 543.6H773.4V555H771.4V557H768.6V555H766.6Z" fill="#2c2c30"/><rect x="763.6" y="545.4" width="7.4" height="7" rx="1" fill="#3c3c44" stroke="#1a1a1c" stroke-width=".6"/><circle cx="766.2" cy="548.8" r="2.4" fill="#38b4dc"/><path d="M765 547.4Q766.4 546.4 767.6 547.6" stroke="#c8f0a0" stroke-width=".8" fill="none"/><path d="M764 554H771" stroke="#8c8c94" stroke-width=".8"/></g>
<g id="b-rain"><path d="M796 543.8L805.4 546.4L807.4 557L797.2 552.8Z" fill="#e4503c" stroke="#8c2418" stroke-width=".6"/><path d="M795.6 553.2Q798 545.4 804.4 547.4T807.4 550.6" stroke="#2a54ec" stroke-width="1.8" fill="none"/><path d="M797.6 553.6Q799.6 547.6 804 549.2T806 552.4" stroke="#3cd4ec" stroke-width="1.6" fill="none"/><path d="M799.6 554.4Q801 550.2 803.6 551T804.8 554.6" stroke="#f4e43c" stroke-width="1.3" fill="none"/><path d="M801.4 556Q802.2 552.8 803.4 553.2" stroke="#2a44dc" stroke-width="1.2" fill="none"/></g>
<g id="b-s1"><rect x="832.6" y="556" width="6.2" height="5.4" fill="#fafafc"/><path d="M823 549.4H831.4V556.4H823Z" fill="#30d6e6" stroke="#10181c" stroke-width=".9"/><path d="M831.4 549.4L833.6 546V553.4L831.4 556.4Z" fill="#18a8bc" stroke="#10181c" stroke-width=".8"/><path d="M820.8 549.4L823.6 543.4H834L831.8 549.4Z" fill="#8ce6f2" stroke="#10181c" stroke-width=".9"/><path d="M825 547.6L827.4 545.2L829.6 547" stroke="#24303c" stroke-width=".7" fill="none"/><path d="M832.2 544L828.2 548.6" stroke="#e6c83c" stroke-width="1.1"/><use href="#dd" x="835.6" y="558"/></g>
<g id="b-s2"><path d="M843 546.6H850.8V556.4H843Z" fill="#30d6e6" stroke="#0c7484" stroke-width=".9"/><path d="M843 546.6L845.4 543.4H853.4L850.8 546.6ZM850.8 546.6L853.4 543.4V553L850.8 556.4Z" fill="#22bcd0" stroke="#0c7484" stroke-width=".8"/><path d="M841.4 552.4L844.4 549H855L852 552.4Z" fill="#b4f0f4" fill-opacity=".75" stroke="#5cc4cc" stroke-width=".6"/><use href="#dd" x="856.9" y="558"/></g>
<g id="b-o" stroke="#f87a0c" fill="none" stroke-width="1.1">
  <circle cx="873.8" cy="554" r="4.4" fill="#f87a0c" stroke="none"/><path d="M869.2 545.6H879.2M869.2 544.4V547.4M879.2 544.4V547.4M881.4 549.4V558.4M880 549.4H882.8M880 558.4H882.8"/>
  <path d="M890 550V546.4H902V557.4H892" stroke-dasharray="2.2 1.4"/><path d="M891 545.4H900.6M901.8 548.6V556.6" stroke-width="1"/><path d="M890 545.4L892.2 544V546.8ZM901.4 545.4L899.2 544V546.8ZM901.8 547.4L900.4 549.6H903.2ZM901.8 557.8L900.4 555.6H903.2Z" fill="#f87a0c" stroke="none"/><path d="M888.6 552.4H892.4V558H888.6ZM888.2 552.4H893" stroke-width="1.2"/>
  <path d="M909 552.4H913V558H909ZM908.4 552.4H913.6" stroke-width="1.2"/><path d="M911 547.6L914 544.6M912.4 550L917.6 544.8M915 552.6L920.6 547M915.6 555.6L921.6 549.6M917.2 557.6L922.4 552.4" stroke-width="1.5"/><path d="M920.4 545.4Q923.6 550.6 920.4 557" stroke-width="1.2"/>
</g>
<g id="ds">
  <path d="M1053.8 537.4Q1060 537 1060 539.8Q1059.6 542 1056.6 543.6" stroke="#e01c2c" stroke-width="1.5" fill="none"/>
  <path d="M1051 545.6Q1056.6 545 1056.2 548Q1055.4 551.8 1048 553L1051.4 545.8" stroke="#5030a4" stroke-width="1.6" fill="none" stroke-linejoin="round"/>
  <path d="M1063.6 543.6Q1058.4 543 1058.2 545.6Q1058.2 547 1060.6 547.6Q1062.8 548.4 1062 550Q1060.6 551.8 1056.8 551.2" stroke="#f2a41c" stroke-width="1.6" fill="none"/>
  <text x="1052" y="557.8" font-family="'Liberation Sans',sans-serif" font-weight="bold" font-style="italic" font-size="5.8" fill="#5030a4" textLength="22.4" lengthAdjust="spacingAndGlyphs">CATIA</text>
</g>
<g id="sb-ic" fill="none" stroke="#8e8ea4" stroke-width="1"><rect x="1040.6" y="567.4" width="4.6" height="4.6" stroke="#f8f8fc"/><path d="M1047.4 566V574.4H1039.4"/><path d="M1046.4 566V573.4" stroke="#f8f8fc" stroke-width=".7"/><circle cx="1067.6" cy="570.4" r="3" stroke="#f8f8fc"/><path d="M1066 568.4Q1069.6 568 1069.2 572" /><path d="M1072.4 566V574.4H1063.4"/></g>
<!-- dialog icons -->
<g id="dlgic">
  <path d="M195.8 499.2V510.4" stroke="#fff" stroke-width="1.3"/><path d="M196.8 499.6V510.8" stroke="#a0a0b6" stroke-width=".8"/>
  <path d="M281.6 498.8V520" stroke="#fff" stroke-width="1.2"/><path d="M282.6 498.8V520" stroke="#9c9cb2" stroke-width=".8"/>
  <rect x="209.4" y="508.6" width="3" height="3" fill="#12125c"/>
  <path d="M225.6 515.4C225.4 509 228.8 507.6 230.6 509.6C232.4 511.8 235.4 512.2 236.2 508.6C236.8 505.6 234.6 503.4 232 504" stroke="#1d6cc4" stroke-width="1.5" fill="none" stroke-linecap="round"/>
  <path d="M243.6 511.6Q244.6 503.6 251 503.4Q256.4 504 257 514.4Q252 507.6 243.6 511.6Z" fill="#34d6ee" stroke="#14246c" stroke-width=".8" stroke-linejoin="round"/><path d="M244 513.4Q251.6 509.4 256.8 515.6" stroke="#a8a8b8" stroke-width=".8" fill="none"/>
  <path d="M263.6 510.2L270.4 504L277 506.8L270.4 513.2Z" fill="#f2e672" stroke="#24303c" stroke-width=".7" stroke-linejoin="round"/><path d="M263.6 510.2L270.4 513.2V516L263.6 513Z" fill="#c8bc48" stroke="#24303c" stroke-width=".6"/><path d="M270.4 513.2L277 506.8V509.6L270.4 516Z" fill="#38aebc" stroke="#24303c" stroke-width=".6"/><path d="M268.8 509.4L271 507.6L272.2 509.4" stroke="#6c6c3c" stroke-width=".6" fill="none"/>
  <g id="d5"><path d="M289.4 505.8L294.8 503L299.6 505.2V512.8L294.2 515.8L289.4 513.4Z" fill="#dcdcea" stroke="#e02838" stroke-width=".9" stroke-linejoin="round"/><path d="M290.6 506.6L294.4 508.4V514.4L290.6 512.6Z" fill="#46d6ee" stroke="#14447c" stroke-width=".6"/><path d="M294.4 508.4L298.8 506V512.2L294.4 514.4Z" fill="#5ce0f2" stroke="#14447c" stroke-width=".6"/><path d="M295.2 509.6L295.6 516.4L297 515.2L298.2 517.6L299.2 517L298 514.8L299.8 514.4Z" fill="#f0dc3c" stroke="#2c2c54" stroke-width=".6" stroke-linejoin="round"/></g>
  <g id="d6"><path d="M308.4 505.8L313.8 503L318.6 505.2V512.8L313.2 515.8L308.4 513.4Z" fill="#dcdcea" stroke="#50505c" stroke-width=".8" stroke-linejoin="round"/><path d="M313.4 508.4L317.8 506V512.2L313.4 514.4Z" fill="#46d6ee" stroke="#e02838" stroke-width=".8"/><path d="M308.4 505.8L313.4 508.4V515.6M313.4 508.4L318.6 505.2" stroke="#50505c" stroke-width=".6" fill="none"/><path d="M314.2 509.6L314.6 516.4L316 515.2L317.2 517.6L318.2 517L317 514.8L318.8 514.4Z" fill="#f0dc3c" stroke="#2c2c54" stroke-width=".6" stroke-linejoin="round"/></g>
</g>



</svg>
</div>
</body>
</html>
